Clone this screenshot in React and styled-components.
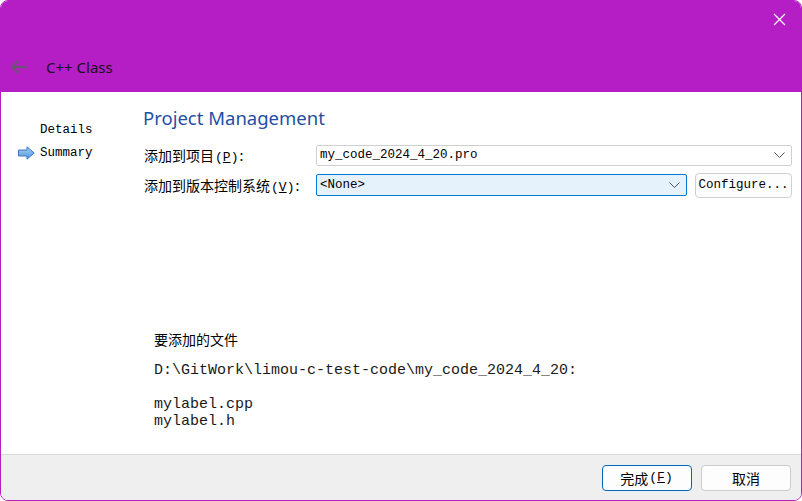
import React from 'react';
import styled, { createGlobalStyle } from 'styled-components';

const GlobalStyle = createGlobalStyle`
    html, body {
        margin: 0;
        padding: 0;
        background: #ffffff;
        overflow: hidden;
    }
    * {
        box-sizing: border-box;
    }
`;

const PURPLE = '#b41ec4';

function BackArrow() {
    return (
        <svg width="18" height="14" viewBox="0 0 18 14">
            <path d="M17 7H2M8 1L2 7l6 6" fill="none" stroke="#66566e" strokeWidth="1.8" />
        </svg>
    );
}

function CloseIcon() {
    return (
        <svg width="13" height="13" viewBox="0 0 13 13">
            <path d="M1 1l11 11M12 1L1 12" stroke="#ffffff" strokeWidth="1.2" />
        </svg>
    );
}

function StepArrow() {
    return (
        <svg width="17" height="14" viewBox="0 0 17 14">
            <defs>
                <linearGradient id="stepGrad" x1="0" y1="0" x2="0" y2="1">
                    <stop offset="0" stopColor="#a9d0f5" />
                    <stop offset="1" stopColor="#4f95e0" />
                </linearGradient>
            </defs>
            <path d="M0.5 4H9V0.8L16.2 7L9 13.2V10H0.5Z" fill="url(#stepGrad)" stroke="#3c78c8" strokeWidth="1" />
        </svg>
    );
}

function Chevron() {
    return (
        <svg width="11" height="6" viewBox="0 0 11 6">
            <path d="M0.5 0.5l5 5 5-5" fill="none" stroke="#555" strokeWidth="1" />
        </svg>
    );
}

function Combo({ value, active, width }) {
    return (
        <ComboBox $active={active} $width={width}>
            <span>{value}</span>
            <Chevron />
        </ComboBox>
    );
}

function App() {
    return (
        <>
            <GlobalStyle />
            <Window>
                <TitleBar>
                    <CloseRow>
                        <CloseIcon />
                    </CloseRow>
                    <HeadingRow>
                        <BackSlot><BackArrow /></BackSlot>
                        <Title>C++ Class</Title>
                    </HeadingRow>
                </TitleBar>

                <Body>
                    <Nav>
                        <NavItem>
                            <NavIcon />
                            <span>Details</span>
                        </NavItem>
                        <NavItem>
                            <NavIcon><StepArrow /></NavIcon>
                            <span>Summary</span>
                        </NavItem>
                    </Nav>

                    <Main>
                        <PageTitle>Project Management</PageTitle>
                        <FormRow>
                            <Label>添加到项目<Mnemonic>(<u>P</u>)</Mnemonic>:</Label>
                            <Combo value="my_code_2024_4_20.pro" width="476px" />
                        </FormRow>
                        <FormRow>
                            <Label>添加到版本控制系统<Mnemonic>(<u>V</u>)</Mnemonic>:</Label>
                            <Combo value="<None>" active width="371px" />
                            <PlainButton>Configure...</PlainButton>
                        </FormRow>

                        <Files>
                            <FilesHeading>要添加的文件</FilesHeading>
                            <FileList>{`D:\\GitWork\\limou-c-test-code\\my_code_2024_4_20:

mylabel.cpp
mylabel.h`}</FileList>
                        </Files>
                    </Main>
                </Body>

                <Footer>
                    <DialogButton $primary>完成<Mnemonic>(<u>F</u>)</Mnemonic></DialogButton>
                    <DialogButton>取消</DialogButton>
                </Footer>
            </Window>
        </>
    );
}

const Window = styled.div`
    width: 802px;
    height: 501px;
    display: flex;
    flex-direction: column;
    border: 1px solid ${PURPLE};
    border-radius: 8px;
    overflow: hidden;
    background: #ffffff;
`;

const TitleBar = styled.div`
    height: 91px;
    flex: none;
    background: ${PURPLE};
    display: flex;
    flex-direction: column;
    justify-content: space-between;
`;

const CloseRow = styled.div`
    display: flex;
    justify-content: flex-end;
    padding: 12px 15px 0 0;
`;

const HeadingRow = styled.div`
    display: flex;
    align-items: center;
    height: 24px;
    margin-bottom: 13px;
`;

const BackSlot = styled.div`
    width: 45px;
    padding-left: 9px;
    display: flex;
    align-items: center;
`;

const Title = styled.div`
    font-family: "Noto Sans", "Liberation Sans", sans-serif;
    font-size: 15px;
    color: #1b1020;
`;

const Body = styled.div`
    flex: 1;
    display: flex;
    background: #ffffff;
`;

const Nav = styled.div`
    width: 142px;
    flex: none;
    padding: 26px 0 0 17px;
    display: flex;
    flex-direction: column;
`;

const NavItem = styled.div`
    display: flex;
    align-items: center;
    height: 23px;
    font-family: "Liberation Mono", "Noto Sans CJK SC", monospace;
    font-size: 12.5px;
    color: #000;
`;

const NavIcon = styled.div`
    width: 22px;
    display: flex;
    align-items: center;
`;

const Main = styled.div`
    flex: 1;
    padding: 14px 10px 0 0;
    display: flex;
    flex-direction: column;
`;

const PageTitle = styled.div`
    font-family: "Noto Sans", "Liberation Sans", sans-serif;
    font-size: 18.5px;
    line-height: 24px;
    color: #1f4fa3;
    margin-bottom: 12px;
`;

const FormRow = styled.div`
    display: flex;
    align-items: center;
    height: 26px;
    margin-bottom: 4px;
`;

const Label = styled.div`
    width: 173px;
    flex: none;
    padding-left: 1px;
    font-family: "Noto Sans CJK SC", sans-serif;
    font-size: 14px;
    color: #000;
    white-space: nowrap;
`;

const Mnemonic = styled.span`
    font-family: "Liberation Mono", "Noto Sans CJK SC", monospace;
    font-size: 13px;
    margin: 0 1px;
`;

const ComboBox = styled.div`
    width: ${p => p.$width};
    height: ${p => (p.$active ? '22px' : '21px')};
    display: flex;
    align-items: center;
    justify-content: space-between;
    padding: 0 6px 0 3px;
    background: ${p => (p.$active ? '#e5f1fb' : '#ffffff')};
    border: 1px solid ${p => (p.$active ? '#0078d4' : '#d0d0d0')};
    border-radius: 2px;
    font-family: "Liberation Mono", "Noto Sans CJK SC", monospace;
    font-size: 12.5px;
    color: #000;
`;

const PlainButton = styled.div`
    margin-left: 8px;
    width: 97px;
    height: 25px;
    display: flex;
    align-items: center;
    justify-content: center;
    background: #fdfdfd;
    border: 1px solid #d0d0d0;
    border-radius: 4px;
    font-family: "Liberation Mono", monospace;
    font-size: 12.5px;
    color: #000;
`;

const Files = styled.div`
    margin-top: 127px;
    padding-left: 11px;
`;

const FilesHeading = styled.div`
    font-family: "Noto Sans CJK SC", sans-serif;
    font-size: 14px;
    line-height: 20px;
    color: #000;
`;

const FileList = styled.pre`
    margin: 13px 0 0;
    font-family: "Liberation Mono", "Courier New", monospace;
    font-size: 15px;
    line-height: 17px;
    color: #1a1a1a;
`;

const Footer = styled.div`
    height: 46px;
    flex: none;
    background: #efefef;
    border-top: 1px solid #dadada;
    display: flex;
    justify-content: flex-end;
    align-items: center;
    gap: 9px;
    padding: 0 10px 0 0;
`;

const DialogButton = styled.div`
    width: 90px;
    height: 26px;
    display: flex;
    align-items: center;
    justify-content: center;
    background: #fdfdfd;
    border: 1px solid ${p => (p.$primary ? '#0067c0' : '#cccccc')};
    border-radius: 4px;
    font-family: "Noto Sans CJK SC", sans-serif;
    font-size: 14px;
    color: #000;
`;

export default App;
